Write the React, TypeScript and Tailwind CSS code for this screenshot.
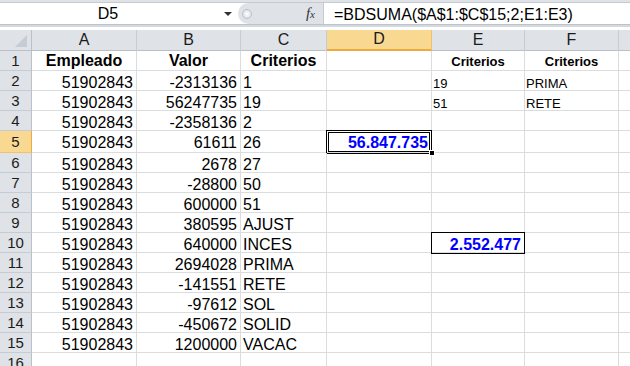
import React from 'react'

type Cell = {
  t: string
  align?: 'l' | 'r' | 'c'
  bold?: boolean
  small?: boolean
  blue?: boolean
  box?: 'active' | 'thin'
}

// anchos de columna A..F (incluye el borde derecho)
const colW = ['w-[105px]', 'w-[104px]', 'w-[86px]', 'w-[105px]', 'w-[93px]', 'w-[94px]']
const colNames = ['A', 'B', 'C', 'D', 'E', 'F']

const num = (t: string): Cell => ({ t, align: 'r' })
const txt = (t: string): Cell => ({ t, align: 'l' })

const emp = num('51902843')

const rows: { n: number; h: string; pb: string; cells: (Cell | null)[] }[] = [
  {
    n: 1,
    h: 'h-[20px]',
    pb: 'pb-[2px]',
    cells: [
      { t: 'Empleado', align: 'c', bold: true },
      { t: 'Valor', align: 'c', bold: true },
      { t: 'Criterios', align: 'c', bold: true },
      null,
      { t: 'Criterios', align: 'c', bold: true, small: true },
      { t: 'Criterios', align: 'c', bold: true, small: true },
    ],
  },
  { n: 2, h: 'h-[20px]', pb: 'pb-0', cells: [emp, num('-2313136'), txt('1'), null, { t: '19', align: 'l', small: true }, { t: 'PRIMA', align: 'l', small: true }] },
  { n: 3, h: 'h-[20px]', pb: 'pb-0', cells: [emp, num('56247735'), txt('19'), null, { t: '51', align: 'l', small: true }, { t: 'RETE', align: 'l', small: true }] },
  { n: 4, h: 'h-[20px]', pb: 'pb-0', cells: [emp, num('-2358136'), txt('2')] },
  {
    n: 5,
    h: 'h-[22px]',
    pb: 'pb-[2px]',
    cells: [emp, num('61611'), txt('26'), { t: '56.847.735', align: 'r', bold: true, blue: true, box: 'active' }],
  },
  { n: 6, h: 'h-[20px]', pb: 'pb-0', cells: [emp, num('2678'), txt('27')] },
  { n: 7, h: 'h-[20px]', pb: 'pb-0', cells: [emp, num('-28800'), txt('50')] },
  { n: 8, h: 'h-[20px]', pb: 'pb-0', cells: [emp, num('600000'), txt('51')] },
  { n: 9, h: 'h-[20px]', pb: 'pb-0', cells: [emp, num('380595'), txt('AJUST')] },
  {
    n: 10,
    h: 'h-[20px]',
    pb: 'pb-0',
    cells: [emp, num('640000'), txt('INCES'), null, { t: '2.552.477', align: 'r', bold: true, blue: true, box: 'thin' }],
  },
  { n: 11, h: 'h-[20px]', pb: 'pb-0', cells: [emp, num('2694028'), txt('PRIMA')] },
  { n: 12, h: 'h-[20px]', pb: 'pb-0', cells: [emp, num('-141551'), txt('RETE')] },
  { n: 13, h: 'h-[20px]', pb: 'pb-0', cells: [emp, num('-97612'), txt('SOL')] },
  { n: 14, h: 'h-[20px]', pb: 'pb-0', cells: [emp, num('-450672'), txt('SOLID')] },
  { n: 15, h: 'h-[20px]', pb: 'pb-0', cells: [emp, num('1200000'), txt('VACAC')] },
  { n: 16, h: 'h-[20px]', pb: 'pb-0', cells: [] },
]

function FormulaBar() {
  return (
    <div className="h-[30px] bg-white">
      <div className="h-[3px] bg-[#dfe3e8] border-b border-[#c4cad1]" />
      <div className="flex h-[21px]">
        {/* cuadro de nombres */}
        <div className="w-[216px] flex items-center justify-center">
          <span className="text-[16px] leading-none text-black">D5</span>
        </div>
        <div className="w-[22px] flex items-center justify-start pl-[8px]">
          <div className="w-0 h-0 border-l-[4px] border-r-[4px] border-t-[4px] border-l-transparent border-r-transparent border-t-[#333]" />
        </div>
        {/* separador + fx */}
        <div className="w-[85px] bg-[#dfe3e8] rounded-l-[11px] flex items-center">
          <div className="ml-[4px] w-[10px] h-[10px] rounded-full border border-[#b9c0c8] bg-radial from-white to-[#d3d8de]" />
          <span className="ml-auto mr-[8px] italic text-[15px] leading-none text-[#333] font-['Liberation_Serif',serif]">
            f<span className="text-[11px]">x</span>
          </span>
        </div>
        {/* barra de formulas */}
        <div className="flex-1 border-l border-[#c4cad1] flex items-center pl-[10px]">
          <span className="text-[16px] leading-none text-black pt-[2px]">=BDSUMA($A$1:$C$15;2;E1:E3)</span>
        </div>
      </div>
      <div className="h-[3px] bg-[#d4d9df] border-t border-[#bcc3cb]" />
      <div className="h-[3px] bg-white" />
    </div>
  )
}

function HeaderRow() {
  return (
    <div className="flex h-[21px]">
      <div className="w-[32px] h-full bg-[#dfe3e8] border-r border-b border-[#b9c0c8] relative">
        <svg className="absolute left-0 top-0" width="31" height="20" viewBox="0 0 31 20">
          <polygon points="27,5 27,17 15,17" fill="#c6ccd3" />
        </svg>
      </div>
      {colNames.map((c, i) => {
        const sel = c === 'D'
        return (
          <div
            key={c}
            className={`${colW[i]} h-full flex items-end justify-center pb-[3px] leading-[14px] text-[16px] border-r border-b ${
              sel
                ? 'bg-[#f9d992] border-r-[#f2c26a] border-b-[#f0a93f] border-b-2 pb-[2px]'
                : 'bg-[#dfe3e8] border-r-[#c6ccd3] border-b-[#b9c0c8]'
            } text-[#1b1b1b]`}
          >
            {c}
          </div>
        )
      })}
      <div className="flex-1 h-full bg-[#dfe3e8] border-b border-[#b9c0c8]" />
    </div>
  )
}

function DataCell({ cell, w, pb }: { cell: Cell | null; w: string; pb: string }) {
  if (!cell) {
    return <div className={`${w} h-full border-r border-b border-[#dadcdd]`} />
  }
  const justify = cell.align === 'r' ? 'justify-end pr-[3px]' : cell.align === 'c' ? 'justify-center' : cell.small ? 'justify-start pl-[1px]' : 'justify-start pl-[2px]'
  const size = cell.small ? 'text-[13px] leading-[12px]' : 'text-[16px] leading-[14px]'
  return (
    <div className={`${w} h-full border-r border-b border-[#dadcdd] relative flex items-end ${justify} ${pb}`}>
      <span className={`${size} whitespace-nowrap ${cell.bold ? 'font-bold' : ''} ${cell.blue ? 'text-[#0000ff]' : 'text-black'}`}>
        {cell.t}
      </span>
      {cell.box === 'active' && (
        <>
          <div className="absolute left-[-1px] top-[-1px] right-[-1px] bottom-[-2px] border-[3px] border-double border-black" />
          <div className="absolute right-[-4px] bottom-[-4px] w-[6px] h-[6px] bg-black border border-white" />
        </>
      )}
      {cell.box === 'thin' && (
        <div className="absolute left-[-1px] top-[-1px] right-[-1px] bottom-[-2px] border border-black" />
      )}
    </div>
  )
}

export default function App() {
  return (
    <div className="w-[630px] h-[366px] overflow-hidden bg-white font-['Liberation_Sans',Arial,sans-serif]">
      <FormulaBar />
      <HeaderRow />
      {rows.map((r) => {
        const sel = r.n === 5
        return (
          <div key={r.n} className={`flex ${r.h}`}>
            <div
              className={`w-[32px] h-full flex items-end justify-center text-[15px] leading-[14px] border-r border-b ${
                sel ? 'bg-[#f9d992] border-r-[#f0a93f] border-b-[#f2c26a] pb-[3px]' : 'bg-[#dfe3e8] border-r-[#b9c0c8] border-b-[#c6ccd3] pb-[2px]'
              } text-[#1b1b1b]`}
            >
              {r.n}
            </div>
            {colW.map((w, i) => (
              <DataCell key={i} cell={r.cells[i] ?? null} w={w} pb={r.pb} />
            ))}
            <div className="flex-1 h-full border-b border-[#dadcdd]" />
          </div>
        )
      })}
    </div>
  )
}
